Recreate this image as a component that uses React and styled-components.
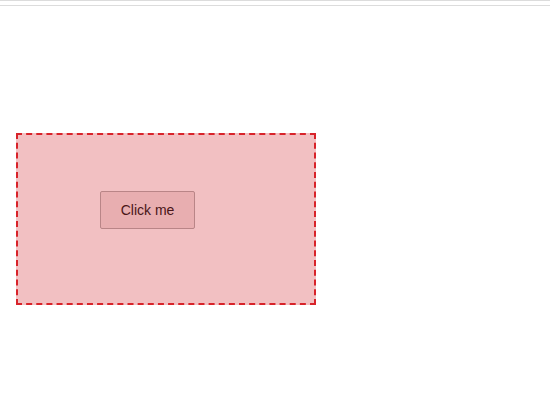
import React from "react";
import styled, { createGlobalStyle } from "styled-components";

const Global = createGlobalStyle`
  html, body { margin: 0; padding: 0; background: #ffffff; }
  body { font-family: "Liberation Sans", Arial, sans-serif; }
`;

const TopBar = styled.div`
  height: 4px;
  border-top: 1px solid #dcdcdc;
  border-bottom: 1px solid #dcdcdc;
  background: #ffffff;
`;

const Page = styled.div`
  padding: 127px 0 0 16px;
`;

const Zone = styled.div`
  box-sizing: border-box;
  width: 300px;
  height: 172px;
  border: 2px dashed #d8232a;
  background: #f2c0c2;
  padding: 56px 0 0 82px;
`;

const Button = styled.button`
  box-sizing: border-box;
  width: 95px;
  height: 38px;
  background: #e8aeb0;
  border: 1px solid #b98587;
  border-radius: 2px;
  color: #4a1518;
  font-family: "Liberation Sans", Arial, sans-serif;
  font-size: 14px;
  cursor: pointer;
`;

export default function App() {
  return (
    <>
      <Global />
      <TopBar />
      <Page>
        <Zone>
          <Button>Click me</Button>
        </Zone>
      </Page>
    </>
  );
}
